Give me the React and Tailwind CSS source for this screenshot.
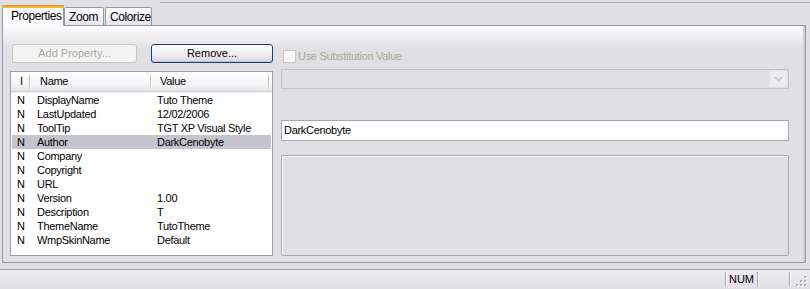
const rows = [
  ['N', 'DisplayName', 'Tuto Theme'],
  ['N', 'LastUpdated', '12/02/2006'],
  ['N', 'ToolTip', 'TGT XP Visual Style'],
  ['N', 'Author', 'DarkCenobyte'],
  ['N', 'Company', ''],
  ['N', 'Copyright', ''],
  ['N', 'URL', ''],
  ['N', 'Version', '1.00'],
  ['N', 'Description', 'T'],
  ['N', 'ThemeName', 'TutoTheme'],
  ['N', 'WmpSkinName', 'Default'],
];

function Tab({ label, active, w }) {
  if (active) {
    return (
      <div
        className="relative z-10 -mb-px h-[21px] border-x border-[#919b9c] bg-[#fcfcfe] flex flex-col"
        style={{ width: w }}
      >
        <div className="h-[3px] -mx-px rounded-t-[3px] bg-[linear-gradient(to_bottom,#e68b2c,#ffc73c)]" />
        <div className="flex-1 pl-[8px] pt-[1px] leading-[15px] text-[12px] tracking-[-0.4px]">{label}</div>
      </div>
    );
  }
  return (
    <div
      className="h-[18px] border-x border-t border-[#919b9c] rounded-t-[2px] bg-[linear-gradient(to_bottom,#ffffff,#e6e5ea)] pl-[4px] pt-[2px] leading-[14px] text-[12px] tracking-[-0.4px]"
      style={{ width: w }}
    >
      {label}
    </div>
  );
}

function HeaderSep() {
  return <div className="w-[2px] h-[14px] border-l border-[#c7c5b2] border-r border-r-white" />;
}

export default function App() {
  return (
    <div className="w-[810px] h-[289px] bg-[#e0dfe3] flex flex-col overflow-hidden text-[11px] tracking-[-0.3px] text-black font-['Liberation_Sans',Arial,sans-serif]">
      <div className="h-[5px] flex">
        <div className="ml-[160px] mt-[2px] h-px flex-1 bg-[#a9a9b0]" />
      </div>

      <div className="h-[20px] flex items-end pl-[2px]">
        <Tab label="Properties" active w={62} />
        <Tab label="Zoom" w={40} />
        <div className="w-[1px]" />
        <Tab label="Colorize" w={47} />
      </div>

      <div className="ml-[2px] w-[804px] h-[238px] border border-[#919b9c] shadow-[inset_-2px_0_0_#d0cfd5] bg-[linear-gradient(to_bottom,#fcfcfe_0px,#e0dfe3_24px)] flex pt-[18px] pl-[7px]">
        <div className="w-[263px] flex flex-col">
          <div className="flex h-[19px] tracking-normal">
            <div className="ml-[2px] w-[125px] h-[19px] border border-[#c9c7ba] rounded-[3px] bg-[#f3f3f3] text-[#aca899] flex items-center justify-center">
              Add Property...
            </div>
            <div className="ml-[14px] w-[122px] h-[19px] border border-[#1f3c6e] rounded-[3px] bg-[linear-gradient(to_bottom,#ffffff,#ecebf0_60%,#d6d5dd)] shadow-[inset_0_-1px_0_#c4c3cc] flex items-center justify-center">
              Remove...
            </div>
          </div>

          <div className="mt-[8px] h-[185px] border border-[#9c9ba2] bg-white flex flex-col">
            <div className="h-[20px] flex items-center bg-[linear-gradient(to_bottom,#ffffff,#f3f2f5_70%,#e2e1e6)] border-b border-[#d5d4da] shadow-[0_1px_0_#ecebef]">
              <div className="w-[20px] h-full flex items-center justify-between">
                <span className="pl-[9px]">I</span>
                <HeaderSep />
              </div>
              <div className="w-[121px] h-full flex items-center justify-between">
                <span className="pl-[9px]">Name</span>
                <HeaderSep />
              </div>
              <div className="w-[118px] h-full flex items-center justify-between">
                <span className="pl-[8px]">Value</span>
                <HeaderSep />
              </div>
            </div>
            <div className="pt-[1px]">
              {rows.map(([t, n, v]) => (
                <div
                  key={n}
                  className={`h-[14px] leading-[14px] flex mx-px ${n === 'Author' ? 'bg-[#c4c4cf]' : ''}`}
                >
                  <div className="w-[19px] pl-[5px]">{t}</div>
                  <div className="w-[121px] pl-[6px]">{n}</div>
                  <div className="flex-1 pl-[5px]">{v}</div>
                </div>
              ))}
            </div>
          </div>
        </div>

        <div className="ml-[8px] w-[508px] flex flex-col">
          <div className="mt-[6px] h-[13px] flex items-center">
            <div className="ml-[2px] w-[13px] h-[13px] border border-[#cac8bb] bg-[#f7f7f5]" />
            <span className="ml-[2px] text-[#aca899] text-[11px] leading-[13px]">Use Substitution Value</span>
          </div>

          <div className="mt-[6px] h-[20px] border border-[#c3c3c6] bg-[#e0dfe3] flex justify-end items-stretch p-px">
            <div className="w-[17px] bg-[#ecebee] border border-[#ecebee] flex items-center justify-center">
              <svg width="9" height="6" viewBox="0 0 9 6">
                <path d="M1 1 L4.5 4.5 L8 1" fill="none" stroke="#c3c3c9" strokeWidth="1.6" />
              </svg>
            </div>
          </div>

          <div className="mt-[31px] h-[21px] border border-[#a7a6aa] bg-white pl-[2px] leading-[19px] text-[11px]">
            DarkCenobyte
          </div>

          <div className="mt-[14px] h-[101px] border border-[#a8a8ae] rounded-[2px] shadow-[inset_1px_1px_0_#ffffff]" />
        </div>
      </div>

      <div className="flex-1" />

      <div className="h-[20px] border-t border-[#a0a0a6] bg-[linear-gradient(to_bottom,#ecebef,#e0dfe3)] flex items-center">
        <div className="flex-1" />
        <div className="w-px h-[15px] bg-[#a6a5ab] shadow-[1px_0_0_#ffffff]" />
        <div className="w-[31px] text-center leading-[15px] tracking-normal">NUM</div>
        <div className="w-px h-[15px] bg-[#a6a5ab] shadow-[1px_0_0_#ffffff]" />
        <div className="w-[31px]" />
        <div className="w-px h-[15px] bg-[#a6a5ab] shadow-[1px_0_0_#ffffff]" />
        <div className="w-[20px] h-full flex items-end justify-end pr-[3px] pb-[2px]">
          <svg width="11" height="11" viewBox="0 0 11 11">
            {[[9, 1], [9, 5], [9, 9], [5, 5], [5, 9], [1, 9]].map(([x, y]) => (
              <g key={`${x}-${y}`}>
                <rect x={x} y={y} width="2" height="2" fill="#ffffff" />
                <rect x={x - 1} y={y - 1} width="2" height="2" fill="#b0afb5" />
              </g>
            ))}
          </svg>
        </div>
      </div>
    </div>
  );
}
